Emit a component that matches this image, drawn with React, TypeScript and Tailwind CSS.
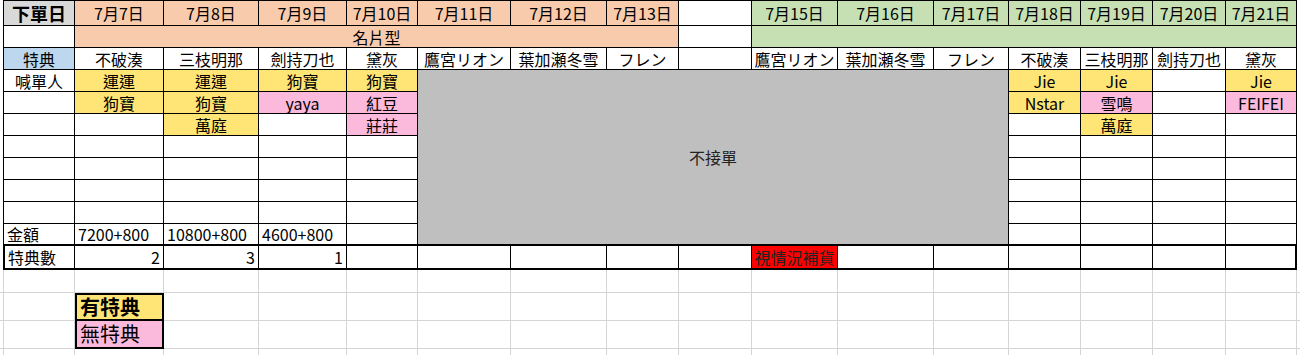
import React from "react";

type P = {
  children?: React.ReactNode;
  c?: string;
  first?: boolean;
  top?: boolean;
  tb?: boolean;
  thickL?: boolean;
  thickR?: boolean;
  al?: "l" | "r" | "c";
};

function Cell({ children, c = "", first, top, tb, thickL, thickR, al = "c" }: P) {
  const parts = [
    "flex items-center whitespace-nowrap border-black leading-none",
    al === "l" ? "justify-start pl-[3px]" : al === "r" ? "justify-end pr-[3px]" : "justify-center",
    first ? (thickL ? "border-l-2" : "border-l") : "",
    top ? "border-t" : "",
    tb ? "border-b-2" : "border-b",
    thickR ? "border-r-2" : "border-r",
    c,
  ];
  return <div className={parts.join(" ")}>{children}</div>;
}

const peach = "bg-[#f8cbad]";
const green = "bg-[#c6e0b4]";
const yellow = "bg-[#ffe575]";
const pink = "bg-[#fbbadc]";
const blue = "bg-[#bdd7ee]";

const dates1 = ["7月7日", "7月8日", "7月9日", "7月10日", "7月11日", "7月12日", "7月13日"];
const dates2 = ["7月15日", "7月16日", "7月17日", "7月18日", "7月19日", "7月20日", "7月21日"];
const names1 = ["不破湊", "三枝明那", "劍持刀也", "黛灰", "鷹宮リオン", "葉加瀬冬雪", "フレン"];
const names2 = ["鷹宮リオン", "葉加瀬冬雪", "フレン", "不破湊", "三枝明那", "劍持刀也", "黛灰"];

function BelowGrid() {
  const cells: React.ReactNode[] = [];
  for (let r = 0; r < 4; r++) {
    for (let c = 0; c < 18; c++) {
      const key = `${r}-${c}`;
      if (c === 2 && r === 1) {
        cells.push(
          <div
            key={key}
            className="flex items-center pl-[3px] border-2 border-black bg-[#ffe575] text-[20px] font-bold leading-none"
          >
            有特典
          </div>
        );
        continue;
      }
      if (c === 2 && r === 2) {
        cells.push(
          <div
            key={key}
            className="flex items-center pl-[3px] border-x-2 border-b-2 border-black bg-[#fbbadc] text-[20px] leading-none"
          >
            無特典
          </div>
        );
        continue;
      }
      const cls = [
        "border-[#d4d4d4]",
        r < 3 ? "border-b" : "",
        c === 0 || c === 17 ? "" : "border-r",
        c === 1 ? "border-l" : "",
      ].join(" ");
      cells.push(<div key={key} className={cls} />);
    }
  }
  return (
    <div className="grid grid-cols-[3px_72px_89px_95px_88px_71px_93px_96px_72px_73px_86px_96px_75px_72px_72px_73px_71px_3px] grid-rows-[23px_28px_28px_6px]">
      {cells}
    </div>
  );
}

export default function App() {
  const midRows = [];
  for (let i = 0; i < 4; i++) {
    midRows.push(
      <React.Fragment key={`m${i}`}>
        <Cell first />
        <Cell />
        <Cell />
        <Cell />
        <Cell />
        <Cell />
        <Cell />
        <Cell />
        <Cell />
      </React.Fragment>
    );
  }

  return (
    <div className="w-[1300px] h-[355px] overflow-hidden bg-white text-black text-[16px] font-['Noto_Sans_CJK_TC','Noto_Sans_CJK_JP',sans-serif]">
      <div className="ml-[3px] grid grid-cols-[72px_89px_95px_88px_71px_93px_96px_72px_73px_86px_96px_75px_72px_72px_73px_71px] grid-rows-[26px_repeat(10,22px)_24px]">
        {/* Row 1 */}
        <Cell first top c="bg-[#d9d9d9] text-[18px] font-bold">
          下單日
        </Cell>
        {dates1.map((d) => (
          <Cell key={d} top c={peach}>
            {d}
          </Cell>
        ))}
        <Cell top />
        {dates2.map((d) => (
          <Cell key={d} top c={green}>
            {d}
          </Cell>
        ))}

        {/* Row 2 */}
        <Cell first />
        <Cell c={`col-span-7 ${peach}`}>名片型</Cell>
        <Cell />
        <Cell c={`col-span-7 ${green}`} />

        {/* Row 3 */}
        <Cell first c={blue}>
          特典
        </Cell>
        {names1.map((n, i) => (
          <Cell key={`a${i}`}>{n}</Cell>
        ))}
        <Cell />
        {names2.map((n, i) => (
          <Cell key={`b${i}`}>{n}</Cell>
        ))}

        {/* Row 4 */}
        <Cell first>喊單人</Cell>
        <Cell c={yellow}>運運</Cell>
        <Cell c={yellow}>運運</Cell>
        <Cell c={yellow}>狗寶</Cell>
        <Cell c={yellow}>狗寶</Cell>
        <Cell tb c="col-span-7 row-span-8 bg-[#bfbfbf] text-[#222]">
          不接單
        </Cell>
        <Cell c={yellow}>Jie</Cell>
        <Cell c={yellow}>Jie</Cell>
        <Cell />
        <Cell c={yellow}>Jie</Cell>

        {/* Row 5 */}
        <Cell first />
        <Cell c={yellow}>狗寶</Cell>
        <Cell c={yellow}>狗寶</Cell>
        <Cell c={pink}>yaya</Cell>
        <Cell c={pink}>紅豆</Cell>
        <Cell c={yellow}>Nstar</Cell>
        <Cell c={pink}>雪鳴</Cell>
        <Cell />
        <Cell c={pink}>FEIFEI</Cell>

        {/* Row 6 */}
        <Cell first />
        <Cell />
        <Cell c={yellow}>萬庭</Cell>
        <Cell />
        <Cell c={pink}>莊莊</Cell>
        <Cell />
        <Cell c={yellow}>萬庭</Cell>
        <Cell />
        <Cell />

        {/* Rows 7-10 */}
        {midRows}

        {/* Row 11 */}
        <Cell first tb al="l">
          金額
        </Cell>
        <Cell tb al="l">
          7200+800
        </Cell>
        <Cell tb al="l">
          10800+800
        </Cell>
        <Cell tb al="l">
          4600+800
        </Cell>
        <Cell tb />
        <Cell tb />
        <Cell tb />
        <Cell tb />
        <Cell tb />

        {/* Row 12 */}
        <Cell first thickL tb al="l">
          特典數
        </Cell>
        <Cell tb al="r">
          2
        </Cell>
        <Cell tb al="r">
          3
        </Cell>
        <Cell tb al="r">
          1
        </Cell>
        <Cell tb />
        <Cell tb />
        <Cell tb />
        <Cell tb />
        <Cell tb />
        <Cell tb c="bg-[#ff0000] text-[#222]">
          視情況補貨
        </Cell>
        <Cell tb />
        <Cell tb />
        <Cell tb />
        <Cell tb />
        <Cell tb />
        <Cell tb thickR />
      </div>
      <BelowGrid />
    </div>
  );
}
